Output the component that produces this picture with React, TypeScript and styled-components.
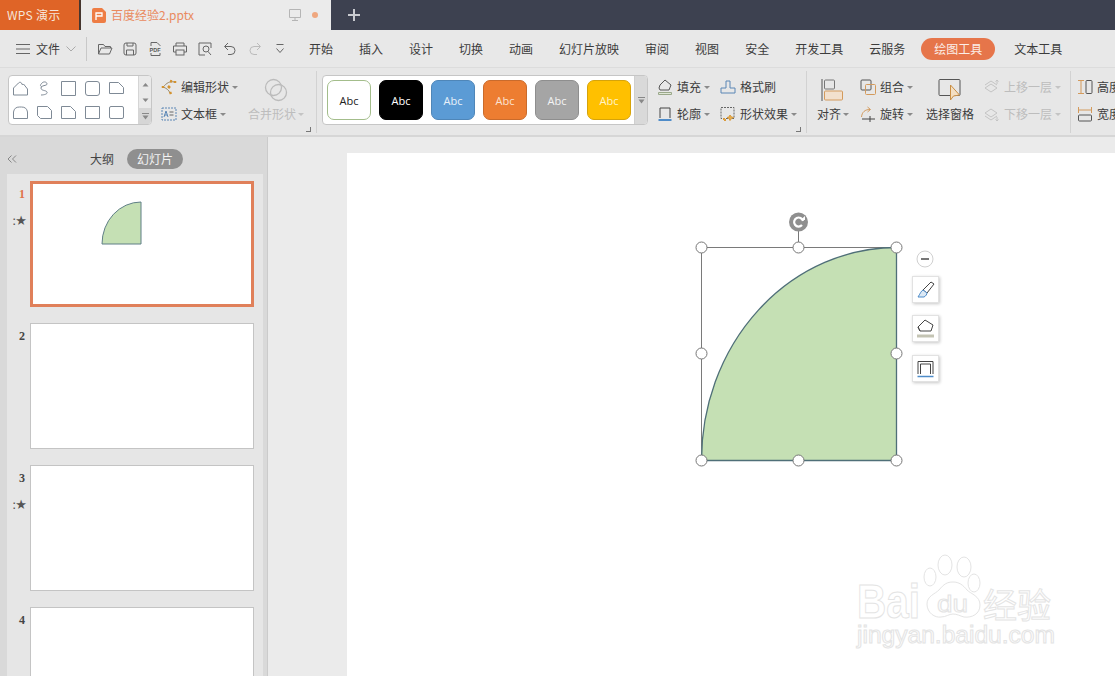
import React, {ReactNode} from "react";
import styled, {createGlobalStyle} from "styled-components";

const GlobalStyle = createGlobalStyle`
    html, body {
        margin: 0;
        padding: 0;
        width: 1115px;
        height: 676px;
        overflow: hidden;
        background: #ebebeb;
    }
    * {
        box-sizing: border-box;
    }
`;

const Page = styled.div`
    width: 1115px;
    height: 676px;
    display: flex;
    flex-direction: column;
    overflow: hidden;
    color: #3c3c3c;
    font: 12px/1 "Noto Sans CJK SC", "Liberation Sans", sans-serif;
`;

/* title bar */
const TitleBar = styled.div`
    flex: none;
    height: 30px;
    display: flex;
    background: #3d4150;
`;

const AppTab = styled.div`
    width: 81px;
    padding-left: 7px;
    display: flex;
    align-items: center;
    background: #df6427;
    border-right: 2px solid #45362f;
    color: #f6e5da;
    font-size: 12px;
    letter-spacing: 0.3px;
`;

const DocTab = styled.div`
    width: 250px;
    padding: 0 11px;
    display: flex;
    align-items: center;
    background: #ebebeb;
    color: #e98a5f;
    font-size: 12px;
`;

const DocName = styled.span`
    margin-left: 5px;
    width: 178px;
`;

const DocDot = styled.i`
    width: 6px;
    height: 6px;
    margin-left: 11px;
    border-radius: 50%;
    background: #efa77f;
`;

const NewTab = styled.div`
    margin-left: 16px;
    display: flex;
    align-items: center;
`;

/* menu row */
const MenuBar = styled.div`
    flex: none;
    height: 38px;
    padding-left: 16px;
    display: flex;
    align-items: center;
    background: #e8e8e8;
    border-bottom: 1px solid #dcdcdc;
`;

const FileMenu = styled.div`
    width: 70px;
    display: flex;
    align-items: center;
    gap: 6px;
    font-size: 12px;
`;

const QuickTools = styled.div`
    height: 24px;
    width: 223px;
    padding-left: 10px;
    display: flex;
    align-items: center;
    gap: 9px;
    border-left: 1px solid #c8c8c8;
`;

const MenuItems = styled.div`
    display: flex;
    align-items: center;
    gap: 26px;
`;

const MenuItem = styled.span<{ active?: boolean }>`
    white-space: nowrap;
    ${props => props.active ? `
        margin: 0 -7px 0 -10px;
        padding: 5px 13px;
        border-radius: 11px;
        background: #e6754a;
        color: #fbeee8;
    ` : ""}
`;

/* ribbon */
const Ribbon = styled.div`
    flex: none;
    height: 69px;
    display: flex;
    background: #e7e7e7;
    border-bottom: 2px solid #d6d6d6;
`;

const Group = styled.div<{ width: number }>`
    position: relative;
    flex: none;
    width: ${props => props.width}px;
    height: 62px;
    margin-top: 3px;
    padding: 3px 0 0 8px;
    display: flex;
    border-right: 1px solid #d2d2d2;
`;

const Launcher = styled.i`
    position: absolute;
    right: 5px;
    bottom: 1px;
    width: 5px;
    height: 5px;
    border-right: 1px solid #777;
    border-bottom: 1px solid #777;
`;

const Gallery = styled.div`
    flex: none;
    height: 50px;
    margin-top: 1px;
    display: flex;
    background: #fff;
    border: 1px solid #c6c6c6;
    border-radius: 4px;
    overflow: hidden;
`;

const ShapeGrid = styled.div`
    width: 130px;
    margin-left: -1px;
    display: grid;
    grid-template-columns: repeat(5, 24px);
    grid-auto-rows: 24px;
    place-items: center;
`;

const Scroller = styled.div`
    width: 13px;
    display: grid;
    grid-auto-rows: 1fr;
    background: #eaeaea;
    border-left: 1px solid #d5d5d5;
`;

const ScrollCell = styled.span<{ tint?: boolean }>`
    display: flex;
    align-items: center;
    justify-content: center;
    background: ${props => props.tint ? "#d6d6d6" : "transparent"};
`;

const ToolColumn = styled.div<{ width: number, left?: number }>`
    flex: none;
    width: ${props => props.width}px;
    margin-left: ${props => props.left ?? 0}px;
    display: flex;
    flex-direction: column;
    gap: 1px;
`;

const Tool = styled.div<{ off?: boolean }>`
    height: 26px;
    display: flex;
    align-items: center;
    gap: 4px;
    white-space: nowrap;
    color: ${props => props.off ? "#bdbdbd" : "#3c3c3c"};
`;

const Caret = styled.i<{ off?: boolean }>`
    width: 0;
    height: 0;
    margin-left: -1px;
    border: 3px solid transparent;
    border-top: 3px solid ${props => props.off ? "#c4c4c4" : "#8a8a8a"};
    border-bottom: none;
`;

const BigTool = styled.div<{ width: number, left?: number, off?: boolean }>`
    flex: none;
    width: ${props => props.width}px;
    margin-left: ${props => props.left ?? 0}px;
    display: flex;
    flex-direction: column;
    align-items: center;
    color: ${props => props.off ? "#bdbdbd" : "#3c3c3c"};
`;

const BigIcon = styled.div`
    height: 30px;
    padding-top: 4px;
`;

const BigLabel = styled.div`
    height: 20px;
    display: flex;
    align-items: center;
    gap: 3px;
    white-space: nowrap;
`;

const StyleGallery = styled.div`
    flex: none;
    width: 326px;
    height: 50px;
    margin: 1px 0 0 -3px;
    display: flex;
    background: #fff;
    border: 1px solid #c6c6c6;
    border-radius: 4px;
    overflow: hidden;
`;

const Swatches = styled.div`
    flex: 1;
    padding-left: 4px;
    display: flex;
    align-items: center;
    gap: 8px;
`;

const Swatch = styled.div<{ fill: string, edge: string, ink: string }>`
    width: 44px;
    height: 40px;
    display: flex;
    align-items: center;
    justify-content: center;
    background: ${props => props.fill};
    border: 1.5px solid ${props => props.edge};
    border-radius: 7px;
    color: ${props => props.ink};
    font: 11px "Open Sans", "Liberation Sans", sans-serif;
`;

const GalleryMore = styled.div`
    width: 13px;
    display: flex;
    align-items: center;
    justify-content: center;
    background: #d9d9d9;
    border-left: 1px solid #cfcfcf;
`;

/* work area */
const Work = styled.div`
    flex: 1;
    min-height: 0;
    display: flex;
`;

const Sidebar = styled.aside`
    flex: none;
    width: 268px;
    padding: 0 4px 0 7px;
    display: flex;
    flex-direction: column;
    background: #d9d9d9;
    border-right: 1px solid #cbcbcb;
`;

const SideTabs = styled.div`
    flex: none;
    height: 37px;
    padding-top: 6px;
    display: flex;
    align-items: center;
    color: #444;
`;

const Collapse = styled.span`
    width: 83px;
    display: flex;
`;

const PillTab = styled.span`
    margin-left: 13px;
    padding: 4px 10px;
    border-radius: 10px;
    background: #8f8f8f;
    color: #f2f2f2;
`;

const SlideList = styled.div`
    flex: 1;
    padding-top: 7px;
    display: flex;
    flex-direction: column;
    gap: 16px;
    background: #e6e6e6;
    overflow: hidden;
`;

const SlideRow = styled.div`
    flex: none;
    display: flex;
`;

const SlideMeta = styled.div`
    flex: none;
    width: 23px;
    padding: 6px 5px 0 0;
    display: flex;
    flex-direction: column;
    align-items: flex-end;
`;

const SlideNumber = styled.span<{ current?: boolean }>`
    font: bold 12px "Liberation Serif", serif;
    color: ${props => props.current ? "#e0734a" : "#444"};
`;

const SlideStar = styled.span`
    margin: 11px -1px 0 0;
    font: 13px "DejaVu Sans", sans-serif;
    letter-spacing: -1px;
    color: #555;
`;

const Thumb = styled.div<{ current?: boolean }>`
    position: relative;
    width: 224px;
    height: 126px;
    background: #fff;
    border: ${props => props.current ? "3px solid #e0805a" : "1px solid #c4c4c4"};
`;

const ThumbShape = styled.svg`
    position: absolute;
    left: 68px;
    top: 16px;
`;

const Stage = styled.main`
    flex: 1;
    min-width: 0;
    padding: 16px 0 0 79px;
    background: #ebebeb;
`;

const Slide = styled.div`
    position: relative;
    width: 768px;
    height: 540px;
    background: #fff;
`;

const ShapeDrawing = styled.svg`
    position: absolute;
    left: 347px;
    top: 57px;
`;

const MinusBadge = styled.svg`
    position: absolute;
    left: 569px;
    top: 97px;
`;

const FloatButton = styled.div<{ top: number }>`
    position: absolute;
    left: 565px;
    top: ${props => props.top}px;
    width: 27px;
    height: 27px;
    display: flex;
    align-items: center;
    justify-content: center;
    background: #fff;
    border: 1px solid #e2e2e2;
    box-shadow: 1px 1px 3px rgba(0, 0, 0, 0.22);
`;

const Watermark = styled.svg`
    position: absolute;
    left: 500px;
    top: 395px;
`;

/* icons */
const Ic = ({w = 16, h = 16, children}: { w?: number, h?: number, children: ReactNode }) =>
    <svg width={w} height={h} viewBox={`0 0 ${w} ${h}`} fill="none" stroke="#666" strokeWidth="1" style={{display: "block", flex: "none"}}>
        {children}
    </svg>;

const UpArrow = () => <Ic w={7} h={5}><path d="M3.500 1L6.500 4.500H.5z" fill="#888" stroke="none"/></Ic>;
const DownArrow = () => <Ic w={7} h={5}><path d="M3.500 4L6.500.5H.5z" fill="#888" stroke="none"/></Ic>;
const MoreArrow = () => <Ic w={7} h={7}><path d="M0 .5h7" stroke="#888"/><path d="M3.500 6.500L6.500 2.500H.5z" fill="#888" stroke="none"/></Ic>;

const quick: ReactNode[] = [
    <><path d="M1.500 13V3.500h5l1.500 2h5.500V7"/><path d="M1.500 13l2.500-6h11l-2.500 6z"/></>,
    <><rect x="2" y="2" width="12" height="12" rx="2"/><path d="M5 2v3h6V2M4.500 14V9h7v5"/></>,
    <><path d="M4 5V1.500h6l3 3V5M4 12v2.500h9V12"/><text x="8" y="11" fontSize="5.500" fontWeight="bold" textAnchor="middle" fill="#555" stroke="none" fontFamily="Liberation Sans">PDF</text></>,
    <><path d="M4 5V2h8v3M4 11H1.500V5h13v6H12"/><rect x="4" y="9" width="8" height="5"/></>,
    <><path d="M14 7V2H2v12h6"/><circle cx="9" cy="8" r="3"/><path d="M11 10.500l3 3.500"/></>,
    <><path d="M6 2L2.500 5.500 6 9"/><path d="M3 5.500h6a4 4 0 0 1 0 8H6"/></>,
    <g stroke="#bbb"><path d="M10 2l3.500 3.500L10 9"/><path d="M13 5.500H7a4 4 0 0 0 0 8h3"/></g>,
    <><path d="M4.500 3.500h7M4.500 7.500l3.500 4 3.500-4"/></>,
];

const shapes = [
    "M1.500 15V8l5-5c1-1 2-1 3 0l1 2 1-1 4 5v6z",
    "M5 15c3 0 7-1 6-3s-6-1-6-4 6-2 6-4-3-3-5-1-2 3 0 4",
    "M1.500 1.500h14v14h-14z",
    "M4 1.500h9a2.500 2.500 0 0 1 2.500 2.500v9a2.500 2.500 0 0 1-2.500 2.500H4A2.500 2.500 0 0 1 1.500 13V4A2.500 2.500 0 0 1 4 1.500z",
    "M1.500 2.500h9l5 5v6h-14z",
    "M1.500 14.500V8a6 6 0 0 1 6-5h2a6 6 0 0 1 6 5v6.500z",
    "M1.500 2.500h10l4 4v8h-11l-3-3z",
    "M1.500 14.500v-12h9l5 5v7z",
    "M1.500 2.500h14v12h-14z",
    "M3 2.500h11a1.500 1.500 0 0 1 1.500 1.500v9a1.500 1.500 0 0 1-1.500 1.500H3A1.500 1.500 0 0 1 1.500 13V4A1.500 1.500 0 0 1 3 2.500z",
];

const menu = ["开始", "插入", "设计", "切换", "动画", "幻灯片放映", "审阅", "视图", "安全", "开发工具", "云服务"];

const swatches = [
    {fill: "#fff", edge: "#a3bd8b", ink: "#222"},
    {fill: "#000", edge: "#000", ink: "#fff"},
    {fill: "#5b9bd5", edge: "#4f86b8", ink: "#e8f1f9"},
    {fill: "#ed7d31", edge: "#c96b2c", ink: "#fbe3d2"},
    {fill: "#a5a5a5", edge: "#8e8e8e", ink: "#f4f4f4"},
    {fill: "#ffc000", edge: "#d6a30a", ink: "#fff3c8"},
];

const handles = [[7, 7], [104, 7], [202, 7], [7, 113], [202, 113], [7, 220], [104, 220], [202, 220]];

export default function App() {
    return <Page>
        <GlobalStyle/>
        <TitleBar>
            <AppTab>WPS 演示</AppTab>
            <DocTab>
                <svg width="14" height="15" viewBox="0 0 14 15" style={{flex: "none"}}>
                    <path d="M2 0h8l4 4v9a2 2 0 0 1-2 2H2a2 2 0 0 1-2-2V2a2 2 0 0 1 2-2z" fill="#ee7d45"/>
                    <path d="M4 12V5h6v3H4" fill="none" stroke="#fff" strokeWidth="1.300"/>
                </svg>
                <DocName>百度经验2.pptx</DocName>
                <svg width="12" height="12" viewBox="0 0 12 12" fill="none" stroke="#b5b5b5" style={{flex: "none"}}>
                    <path d="M.5.500h11v8H.500zM6 8.500v3M3 11.500h6"/>
                </svg>
                <DocDot/>
            </DocTab>
            <NewTab>
                <svg width="14" height="14" viewBox="0 0 14 14" stroke="#c9cbd0" strokeWidth="2">
                    <path d="M7 1v12M1 7h12"/>
                </svg>
            </NewTab>
        </TitleBar>

        <MenuBar>
            <FileMenu>
                <Ic w={14} h={12}><path d="M0 1.500h14M0 6h14M0 10.500h14"/></Ic>
                文件
                <Ic w={10} h={8}><path d="M.5 1.500L5 6l4.500-4.500" stroke="#aaa"/></Ic>
            </FileMenu>
            <QuickTools>
                {quick.map((icon, idx) => <Ic key={idx}>{icon}</Ic>)}
            </QuickTools>
            <MenuItems>
                {menu.map(item => <MenuItem key={item}>{item}</MenuItem>)}
                <MenuItem active>绘图工具</MenuItem>
                <MenuItem>文本工具</MenuItem>
            </MenuItems>
        </MenuBar>

        <Ribbon>
            <Group width={317}>
                <Gallery>
                    <ShapeGrid>
                        {shapes.map((d, idx) => <Ic key={idx} w={17} h={17}>
                            <path d={d} stroke="#7f8a96"/>
                        </Ic>)}
                    </ShapeGrid>
                    <Scroller>
                        <ScrollCell><UpArrow/></ScrollCell>
                        <ScrollCell><DownArrow/></ScrollCell>
                        <ScrollCell tint><MoreArrow/></ScrollCell>
                    </Scroller>
                </Gallery>
                <ToolColumn width={92} left={9}>
                    <Tool>
                        <Ic>
                            <path d="M14 3C8 2 6 4 2 8c3 1 6 3 7 6" stroke="#9a8a6a"/>
                            <path d="M9 2l2 .5M2 7v2M9 13l1 2M14 2v2M7 7l2 2" stroke="#d3922f" strokeWidth="2.500"/>
                        </Ic>
                        编辑形状<Caret/>
                    </Tool>
                    <Tool>
                        <Ic><rect x="1" y="2" width="14" height="12" strokeDasharray="2 1" stroke="#5a86b5"/><path d="M8.500 6h4M8.500 9h4"/><path d="M3 11l2-6 2 6M3.800 9h2.400" stroke="#5a86b5"/></Ic>
                        文本框<Caret/>
                    </Tool>
                </ToolColumn>
                <BigTool width={60} off left={-7}>
                    <BigIcon>
                        <Ic w={24} h={24}><circle cx="9.500" cy="9.500" r="8" stroke="#bbb" strokeWidth="1.300"/><circle cx="14.500" cy="14.500" r="8" stroke="#bbb" strokeWidth="1.300"/></Ic>
                    </BigIcon>
                    <BigLabel>合并形状<Caret off/></BigLabel>
                </BigTool>
                <Launcher/>
            </Group>

            <Group width={490}>
                <StyleGallery>
                    <Swatches>
                        {swatches.map(s => <Swatch key={s.fill} {...s}>Abc</Swatch>)}
                    </Swatches>
                    <GalleryMore><MoreArrow/></GalleryMore>
                </StyleGallery>
                <ToolColumn width={63} left={9}>
                    <Tool>
                        <Ic><path d="M2 9l1-3 5-5 6 5-2 5H3z" stroke="#555"/><path d="M1.500 13.500h13v2h-13z" stroke="#9aa88a" fill="#dfe6d6"/></Ic>
                        填充<Caret/>
                    </Tool>
                    <Tool>
                        <Ic><path d="M3 12V2h10v10" stroke="#444"/><path d="M1.500 14h13" stroke="#4f8cc9" strokeWidth="2"/></Ic>
                        轮廓<Caret/>
                    </Tool>
                </ToolColumn>
                <ToolColumn width={80}>
                    <Tool>
                        <Ic><path d="M1 14V9h5V2h4v7h5v5z" stroke="#5a86b5"/></Ic>
                        格式刷
                    </Tool>
                    <Tool>
                        <Ic><rect x="1" y="1.500" width="13" height="11" strokeDasharray="2 1"/><path d="M10 9l1.500 2 2 .5-2 1-1.500 2-1-2-2-1 2-.5zM4 12l1 1 1 1-1 1-1-1-1-1z" stroke="#d99a3c" fill="#e5ad4e"/></Ic>
                        形状效果<Caret/>
                    </Tool>
                </ToolColumn>
                <Launcher/>
            </Group>

            <Group width={264}>
                <BigTool width={36}>
                    <BigIcon>
                        <Ic w={24} h={24}><path d="M1 1v22" stroke="#555"/><rect x="3.500" y="2" width="10" height="9" rx="1" stroke="#777"/><rect x="3.500" y="13" width="18" height="9" rx="1" stroke="#d39a5c" fill="#f2e0cd"/></Ic>
                    </BigIcon>
                    <BigLabel>对齐<Caret/></BigLabel>
                </BigTool>
                <ToolColumn width={65} left={9}>
                    <Tool>
                        <Ic><rect x="1" y="1" width="10" height="10" rx="1" stroke="#555"/><rect x="5.500" y="5.500" width="10" height="10" rx="1" stroke="#d39a5c"/></Ic>
                        组合<Caret/>
                    </Tool>
                    <Tool>
                        <Ic><path d="M1.500 11C2 6 5 3.500 10 3.500M7.500 1l3 2.500-3 2.500" stroke="#d39a5c"/><path d="M2 13h13M10 10v6" stroke="#444"/></Ic>
                        旋转<Caret/>
                    </Tool>
                </ToolColumn>
                <BigTool width={50}>
                    <BigIcon>
                        <Ic w={24} h={24}><rect x="1" y="1.500" width="21" height="16" rx="1" stroke="#555"/><path d="M12.500 7v15l3-4 6-1z" stroke="#c98f45" fill="#f4dfc2"/></Ic>
                    </BigIcon>
                    <BigLabel>选择窗格</BigLabel>
                </BigTool>
                <ToolColumn width={82} left={9}>
                    <Tool off>
                        <Ic><path d="M1 9l6-4 6 4-6 4zM1 6l6-4 6 4M13 5V1M11.500 2.500L13 1l1.500 1.500" stroke="#c4c4c4"/></Ic>
                        上移一层<Caret off/>
                    </Tool>
                    <Tool off>
                        <Ic><path d="M1 7l6-4 6 4-6 4zM1 10l6 4 6-4M13 11v4M11.500 13.500L13 15l1.500-1.500" stroke="#c4c4c4"/></Ic>
                        下移一层<Caret off/>
                    </Tool>
                </ToolColumn>
            </Group>

            <Group width={60}>
                <ToolColumn width={60} left={-2}>
                    <Tool>
                        <Ic><path d="M1 1.500h6M1 14.500h6M4 2v12" stroke="#d39a5c"/><rect x="9" y="1.500" width="6" height="13" rx="1" stroke="#555"/></Ic>
                        高度
                    </Tool>
                    <Tool>
                        <Ic><path d="M1.500 1v6M14.500 1v6M2 4h12" stroke="#d39a5c"/><rect x="1.500" y="9" width="13" height="6" rx="1" stroke="#555"/></Ic>
                        宽度
                    </Tool>
                </ToolColumn>
            </Group>
        </Ribbon>

        <Work>
            <Sidebar>
                <SideTabs>
                    <Collapse>
                        <Ic w={10} h={8}><path d="M4.500.500L1 4l3.500 3.500M9 .500L5.500 4 9 7.500" stroke="#888"/></Ic>
                    </Collapse>
                    大纲
                    <PillTab>幻灯片</PillTab>
                </SideTabs>
                <SlideList>
                    <SlideRow>
                        <SlideMeta>
                            <SlideNumber current>1</SlideNumber>
                            <SlideStar>:★</SlideStar>
                        </SlideMeta>
                        <Thumb current>
                            <ThumbShape width="42" height="45" viewBox="0 0 42 45">
                                <path d="M1 44A39 42 0 0 1 40 2V44Z" fill="#c5e0b4" stroke="#5f7f86" strokeWidth="1"/>
                            </ThumbShape>
                        </Thumb>
                    </SlideRow>
                    <SlideRow>
                        <SlideMeta><SlideNumber>2</SlideNumber></SlideMeta>
                        <Thumb/>
                    </SlideRow>
                    <SlideRow>
                        <SlideMeta>
                            <SlideNumber>3</SlideNumber>
                            <SlideStar>:★</SlideStar>
                        </SlideMeta>
                        <Thumb/>
                    </SlideRow>
                    <SlideRow>
                        <SlideMeta><SlideNumber>4</SlideNumber></SlideMeta>
                        <Thumb/>
                    </SlideRow>
                </SlideList>
            </Sidebar>

            <Stage>
                <Slide>
                    <ShapeDrawing width="210" height="260" viewBox="0 -30 210 260">
                        <path d="M104.500 7V-9" stroke="#777" strokeWidth="1"/>
                        <circle cx="104.500" cy="-18" r="9.500" fill="#8f8f8f"/>
                        <path d="M108 -15a4.500 4.500 0 1 1 1-4" fill="none" stroke="#fff" strokeWidth="2.200"/>
                        <path d="M106.500 -20h4.500v-4z" fill="#fff"/>
                        <rect x="7.500" y="7.500" width="195" height="213" fill="none" stroke="#7a7a7a" strokeWidth="1"/>
                        <path d="M7.500 220.500A195 213 0 0 1 202.500 7.500V220.500Z" fill="#c5e0b4" stroke="#4f6f78" strokeWidth="1.300"/>
                        {handles.map(([x, y]) =>
                            <circle key={`${x}-${y}`} cx={x + 0.5} cy={y + 0.5} r="5.500" fill="#fff" stroke="#777" strokeWidth="1"/>)}
                    </ShapeDrawing>
                    <MinusBadge width="18" height="18" viewBox="0 0 18 18" fill="none">
                        <circle cx="9" cy="9" r="8" fill="#fff" stroke="#d0d0d0"/>
                        <path d="M5 9h8" stroke="#777" strokeWidth="2"/>
                    </MinusBadge>
                    <FloatButton top={123}>
                        <Ic w={19} h={18}><path d="M7 9l8-8 3 2-7 9z" stroke="#444"/><path d="M7 9c-2 1-3 4-5 7h6c2-1 3-3 3-4z" stroke="#4f8cc9" fill="#dce9f5"/></Ic>
                    </FloatButton>
                    <FloatButton top={162}>
                        <Ic w={19} h={19}><path d="M2 8l7-7 8 5-2 6H4zM2 8l2 4" stroke="#444"/><path d="M1 15.500h17v3H1z" stroke="none" fill="#c4c4b4"/></Ic>
                    </FloatButton>
                    <FloatButton top={202}>
                        <Ic w={19} h={18}><path d="M2 14V1.500h15V14M4.500 14V4h10v10" stroke="#444"/><path d="M1.500 16.500h16" stroke="#4f8cc9" strokeWidth="1.500"/></Ic>
                    </FloatButton>
                    <Watermark width="215" height="110" viewBox="0 0 215 110" fill="#fff" stroke="#e4e4e4" strokeWidth="1">
                        <text x="10" y="70" fontFamily="Liberation Sans" fontWeight="bold" fontSize="48" textLength="63" lengthAdjust="spacingAndGlyphs">Bai</text>
                        <ellipse cx="98" cy="17" rx="7" ry="10"/>
                        <ellipse cx="117" cy="19" rx="7" ry="10"/>
                        <ellipse cx="127" cy="35" rx="6" ry="9"/>
                        <ellipse cx="83" cy="29" rx="6" ry="9"/>
                        <path d="M80 56c0-8 8-10 12-14 5-6 8-8 14-8s10 3 14 8c4 4 13 6 13 15 0 9-8 13-16 12-4-1-7-3-11-3s-7 3-12 3c-6 1-14-4-14-13z"/>
                        <text x="90" y="64" fontFamily="Liberation Sans" fontSize="24" textLength="31" lengthAdjust="spacingAndGlyphs">du</text>
                        <text x="136" y="70" fontFamily="Noto Sans CJK SC" fontSize="34">经验</text>
                        <text x="10" y="95" fontFamily="Liberation Sans" fontSize="23" textLength="198" lengthAdjust="spacingAndGlyphs">jingyan.baidu.com</text>
                    </Watermark>
                </Slide>
            </Stage>
        </Work>
    </Page>;
}
